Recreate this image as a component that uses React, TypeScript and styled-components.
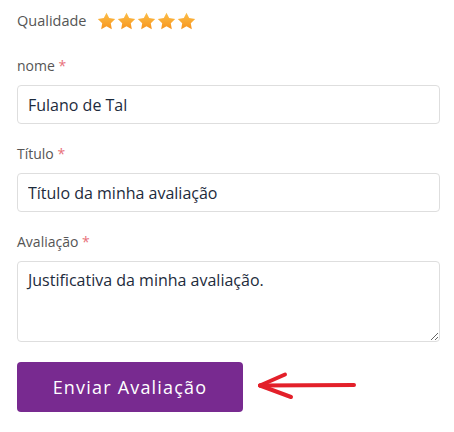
import React from 'react';
import styled, { createGlobalStyle } from 'styled-components';

const GlobalStyle = createGlobalStyle`
  body {
    margin: 0;
    background: #fff;
    font-family: "Open Sans", "Liberation Sans", sans-serif;
  }
`;

const Form = styled.form`
  width: 423px;
  padding: 11px 0 0 17px;
`;

const RatingRow = styled.div`
  display: flex;
  align-items: center;
  gap: 10px;
  height: 20px;
  margin-bottom: 25px;
`;

const Label = styled.label`
  display: block;
  font-size: 14px;
  line-height: 20px;
  color: #555;
`;

const RatingLabel = styled(Label)`
  font-size: 14.5px;
`;

const Required = styled.span`
  color: #e8707a;
`;

const Stars = styled.div`
  display: flex;
  gap: 1px;
`;

const Field = styled.div`
  display: flex;
  flex-direction: column;
  gap: 9px;
  margin-bottom: 20px;
`;

const Input = styled.input`
  box-sizing: border-box;
  width: 100%;
  height: 39px;
  padding: 0 10px;
  border: 1px solid #dedede;
  border-radius: 4px;
  font-family: inherit;
  font-size: 16px;
  color: #1d2b3c;
  outline: none;
`;

const TextArea = styled.textarea`
  box-sizing: border-box;
  width: 100%;
  height: 81px;
  padding: 7px 10px;
  border: 1px solid #dedede;
  border-radius: 4px;
  font-family: inherit;
  font-size: 16px;
  line-height: 22px;
  color: #1d2b3c;
  outline: none;
`;

const SubmitRow = styled.div`
  display: flex;
  align-items: center;
  gap: 14px;
  margin-top: 1px;
`;

const Button = styled.button`
  width: 226px;
  height: 50px;
  border: none;
  border-radius: 4px;
  background: #782a90;
  color: #fff;
  font-family: inherit;
  font-size: 18px;
  letter-spacing: 1.2px;
  cursor: pointer;
`;

const Star = () => (
  <svg width="19" height="18" viewBox="0 0 24 23">
    <defs>
      <linearGradient id="sg" x1="0" y1="0" x2="0" y2="1">
        <stop offset="0" stopColor="#fcc04a" />
        <stop offset="1" stopColor="#f7941d" />
      </linearGradient>
    </defs>
    <path
      d="M12 0.8l3.4 7 7.7 1.1-5.6 5.4 1.3 7.6L12 18.3l-6.8 3.6 1.3-7.6L0.9 8.9l7.7-1.1z"
      fill="url(#sg)"
    />
  </svg>
);

const Arrow = () => (
  <svg width="100" height="34" viewBox="0 0 100 34">
    <g stroke="#e3202a" strokeWidth="4" strokeLinecap="round" fill="none">
      <path d="M3 15.5 L97 15" />
      <path d="M3 15.5 L28 4.5" />
      <path d="M3 15.5 L34 27" />
    </g>
  </svg>
);

export default function App() {
  return (
    <>
      <GlobalStyle />
      <Form onSubmit={(e) => e.preventDefault()}>
        <RatingRow>
          <RatingLabel as="span">Qualidade</RatingLabel>
          <Stars>
            {[0, 1, 2, 3, 4].map((i) => (
              <Star key={i} />
            ))}
          </Stars>
        </RatingRow>
        <Field>
          <Label>
            nome <Required>*</Required>
          </Label>
          <Input defaultValue="Fulano de Tal" />
        </Field>
        <Field>
          <Label>
            Título <Required>*</Required>
          </Label>
          <Input defaultValue="Título da minha avaliação" />
        </Field>
        <Field>
          <Label>
            Avaliação <Required>*</Required>
          </Label>
          <TextArea defaultValue="Justificativa da minha avaliação." />
        </Field>
        <SubmitRow>
          <Button type="submit">Enviar Avaliação</Button>
          <Arrow />
        </SubmitRow>
      </Form>
    </>
  );
}
